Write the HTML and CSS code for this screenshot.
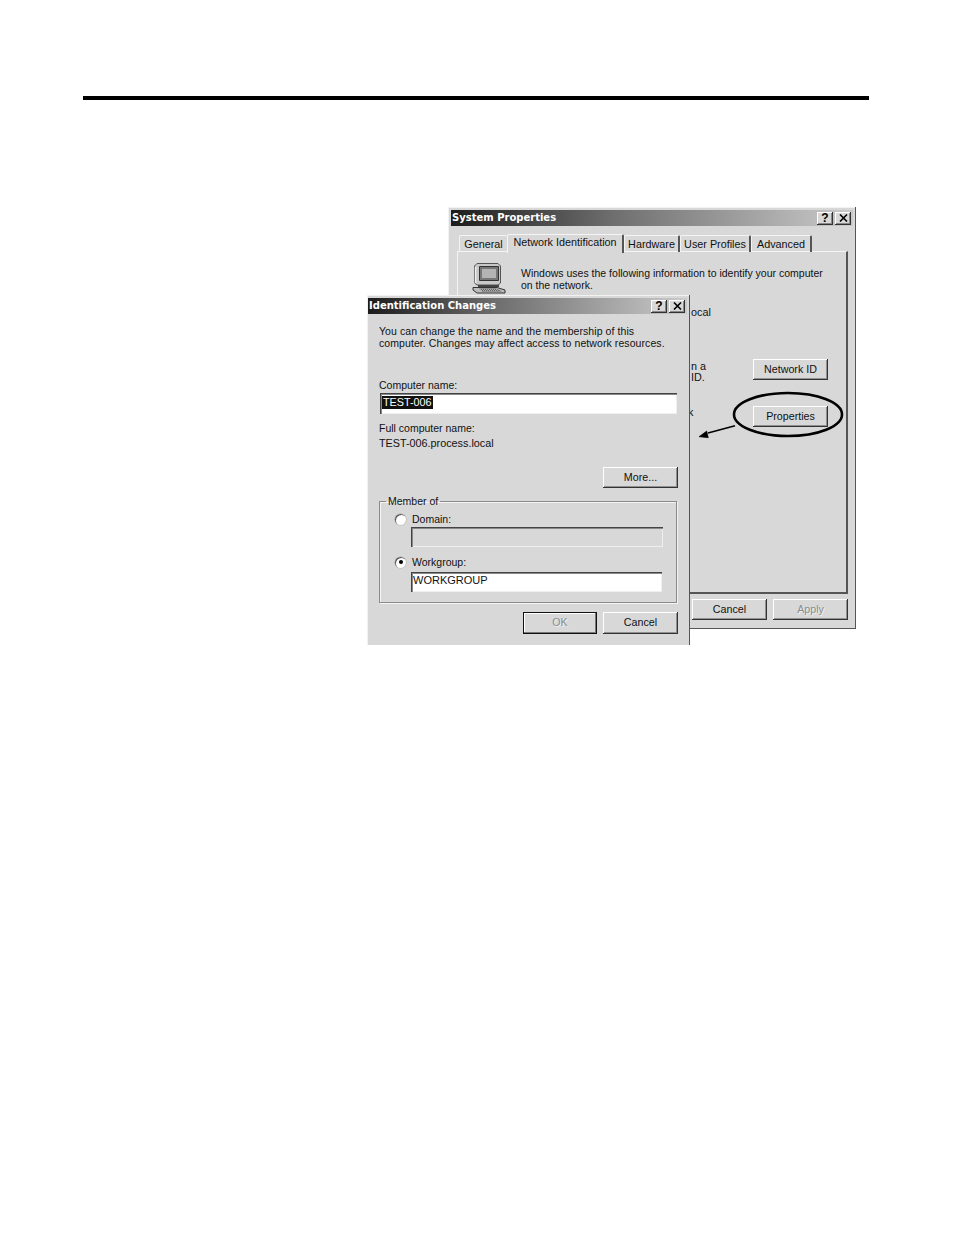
FILE: index.html
```html
<!DOCTYPE html>
<html lang="en">
<head>
<meta charset="utf-8">
<title>Identification Changes</title>
<link rel="stylesheet" href="styles.css">
</head>
<body>
<div class="page">
  <div class="rule"></div>

  <section class="win win-back">
    <header class="titlebar">
      <span class="title">System Properties</span>
      <span class="tbtn q">?</span>
      <span class="tbtn x"><svg width="9" height="8" viewBox="0 0 9 8"><path d="M1 0.5L8 7.5M8 0.5L1 7.5" stroke="#000" stroke-width="1.6" fill="none"/></svg></span>
    </header>
    <nav class="tabs">
      <span class="tab t-general">General</span>
      <span class="tab active t-net">Network Identification</span>
      <span class="tab t-hw">Hardware</span>
      <span class="tab t-up">User Profiles</span>
      <span class="tab t-adv">Advanced</span>
    </nav>
    <div class="panel">
      <div class="row-intro">
        <svg class="pc" width="34" height="31" viewBox="0 0 34 31">
          <path d="M2.5 3L5 0.5H26L28.5 3V20L26 22H5L2.5 20Z" fill="#c8c8c8" stroke="#555" stroke-width="1"/>
          <path d="M7.5 3.5H26.5V17.5H7.5Z" fill="#777" stroke="#333" stroke-width="1"/>
          <path d="M10 6H24V15H10Z" fill="#b4b4b4"/>
          <path d="M3.5 4V20" stroke="#f0f0f0" stroke-width="1.5"/>
          <path d="M6 22H27V24H6Z" fill="#444"/>
          <path d="M1 24.5H25L33 27V30H5L1 27Z" fill="#bdbdbd" stroke="#333" stroke-width="1"/>
          <path d="M7 25.5H24L30 28.5H10Z" fill="#666"/>
          <path d="M8 26.5H25M9 27.5H27" stroke="#ddd" stroke-width="0.6" stroke-dasharray="1 1"/>
        </svg>
        <p class="intro">Windows uses the following information to identify your computer<br>on the network.</p>
      </div>
      <p class="frag f-ocal">ocal</p>
      <div class="action a-net">
        <p class="frag f-tight">n a<br>ID.</p>
        <span class="btn b-side">Network ID</span>
      </div>
      <div class="action a-prop">
        <p class="frag f-k">k</p>
        <span class="btn b-side">Properties</span>
      </div>
    </div>
    <footer class="foot">
      <span class="btn b-std">Cancel</span>
      <span class="btn b-std disabled">Apply</span>
    </footer>
  </section>

  <svg class="callout" width="160" height="60" viewBox="0 0 160 60">
    <ellipse cx="56" cy="22.5" rx="54" ry="21.5" fill="none" stroke="#000" stroke-width="2.6"/>
    <path d="M3 33.7L-24 41" stroke="#000" stroke-width="1.6" fill="none"/>
    <path d="M-33 44.7L-25.3 39L-23.7 45.7Z" fill="#000" stroke="#000" stroke-width="0.6"/>
  </svg>

  <section class="win win-front">
    <header class="titlebar">
      <span class="title">Identification Changes</span>
      <span class="tbtn q">?</span>
      <span class="tbtn x"><svg width="9" height="8" viewBox="0 0 9 8"><path d="M1 0.5L8 7.5M8 0.5L1 7.5" stroke="#000" stroke-width="1.6" fill="none"/></svg></span>
    </header>
    <div class="dlg">
      <p class="lead">You can change the name and the membership of this<br>computer. Changes may affect access to network resources.</p>
      <label class="lbl-name">Computer name:</label>
      <div class="field f-name"><span class="sel">TEST-006</span></div>
      <p class="lbl-full">Full computer name:</p>
      <p class="val-full">TEST-006.process.local</p>
      <div class="more-row"><span class="btn b-std">More...</span></div>
      <fieldset class="group">
        <legend>Member of</legend>
        <div class="radio-row"><span class="radio"></span><span>Domain:</span></div>
        <div class="field f-dom off"></div>
        <div class="radio-row r-wg"><span class="radio on"></span><span>Workgroup:</span></div>
        <div class="field f-wg"><span class="wg">WORKGROUP</span></div>
      </fieldset>
      <div class="dlg-foot">
        <span class="btn b-ok disabled">OK</span>
        <span class="btn b-std">Cancel</span>
      </div>
    </div>
  </section>
</div>
</body>
</html>
```
FILE: styles.css
```css
* { box-sizing: border-box; }
html, body { margin: 0; padding: 0; background: #fff; }
p { margin: 0; }
.page {
  position: relative;
  width: 954px;
  height: 1235px;
  overflow: hidden;
  background: #fff;
  font: 10.5px/12px "Liberation Sans", Arial, sans-serif;
  color: #111;
}
.rule { position: relative; top: 96px; margin: 0 85px 0 83px; height: 4px; background: #000; }

.win {
  position: absolute;
  background: #d8d8d8;
  display: flex;
  flex-direction: column;
  box-shadow: inset 1px 1px #f2f2f2;
}
.win-back {
  left: 448px; top: 207px; width: 408px; height: 422px;
  padding: 3px 2px 0 3px;
  border-right: 1px solid #555;
  border-bottom: 1px solid #555;
}
.win-front {
  left: 367px; top: 295px; width: 323px; height: 350px;
  padding: 3px 2px 0 1px;
  border-right: 1px solid #555;
}
.titlebar {
  height: 16px;
  display: flex;
  align-items: center;
  padding: 0 2px 0 1px;
  background: linear-gradient(90deg, #1c1c1c 0%, #6e6e6e 40%, #cacaca 100%);
  flex: none;
}
.title {
  flex: 1;
  font: bold 10px/16px "DejaVu Sans", Verdana, sans-serif;
  color: #fff;
}
.tbtn {
  width: 16px; height: 13px;
  background: #d8d8d8;
  box-shadow: inset -1px -1px #333, inset 1px 1px #fff, inset -2px -2px #888;
  display: flex; align-items: center; justify-content: center;
  font: bold 12px/13px "Liberation Sans", Arial, sans-serif;
  color: #000;
}
.tbtn.x { margin-left: 2px; }

.tabs { display: flex; align-items: flex-end; height: 19px; margin: 7px 0 0 8px; position: relative; z-index: 1; flex: none; }
.tab {
  height: 17px;
  font-size: 10.8px;
  line-height: 16px;
  text-align: center;
  border-top: 1px solid #f4f4f4;
  border-left: 1px solid #f4f4f4;
  border-right: 2px solid #555;
  border-radius: 2px 2px 0 0;
}
.tab.active { height: 19px; line-height: 15px; background: #d8d8d8; margin-bottom: -1px; }
.t-general { width: 48px; border-right: 0; }
.t-net { width: 117px; }
.t-hw { width: 56px; }
.t-up { width: 71px; }
.t-adv { width: 61px; }

.panel {
  margin: -1px 5px 0 6px;
  height: 343px;
  padding: 12px 18px 0 14px;
  border-top: 1px solid #f4f4f4;
  border-left: 1px solid #f4f4f4;
  border-right: 2px solid #555;
  border-bottom: 2px solid #555;
  flex: none;
}
.row-intro { display: flex; height: 30px; }
.pc { margin-top: -1px; flex: none; }
.intro { margin: 3px 0 0 15px; white-space: nowrap; }
.frag { margin-left: 219px; white-space: nowrap; font-size: 10.8px; }
.f-ocal { margin-top: 12px; }
.f-tight { line-height: 11px; }
.action { display: flex; justify-content: space-between; align-items: flex-start; }
.a-net { margin-top: 41px; height: 25px; }
.a-net .frag { margin-top: 2px; }
.a-prop { margin-top: 22px; }
.a-prop .f-k { margin: 0 0 0 216px; }

.btn {
  display: inline-flex; align-items: center; justify-content: center;
  height: 21px;
  padding-bottom: 2px;
  font-size: 10.7px;
  background: #d8d8d8;
  box-shadow: inset -1px -1px #333, inset 1px 1px #fff, inset -2px -2px #909090;
}
.b-side, .b-std { width: 75px; }
.disabled { color: #8c8c8c; text-shadow: 1px 1px #f0f0f0; }
.foot { display: flex; justify-content: flex-end; gap: 6px; margin: 5px 5px 0 0; flex: none; }

.callout { position: absolute; left: 732px; top: 392px; overflow: visible; }

.dlg { padding: 11px 9px 0 11px; flex: 1; }
.lead { white-space: nowrap; letter-spacing: 0.08px; }
.lbl-name { display: block; margin-top: 30px; }
.field {
  height: 21px;
  margin: 2px 0 0 1px;
  padding: 3px 0 0 2px;
  background: #fff;
  box-shadow: inset 1px 1px #444, inset 2px 2px #888, inset -1px -1px #efefef;
}
.f-name { width: 297px; }
.sel { display: inline-block; background: #111; color: #fff; padding: 0 1px; height: 13px; font-size: 10.8px; line-height: 13px; }
.lbl-full { margin-top: 8px; }
.val-full { margin-top: 3px; font-size: 10.8px; }
.more-row { display: flex; justify-content: flex-end; margin: 18px 0 0; }
.group {
  margin: 7px 0 0;
  padding: 6px 14px 10px 15px;
  width: 298px;
  min-width: 0;
  border: 1px solid #8a8a8a;
  box-shadow: 1px 1px #f4f4f4, inset 1px 1px #f4f4f4;
}
.group legend { margin-left: -9px; padding: 0 2px; line-height: 12px; }
.radio-row { display: flex; align-items: center; gap: 6px; height: 12px; }
.radio {
  width: 11px; height: 11px; border-radius: 50%;
  background: #fff;
  box-shadow: inset 1px 1px #555, 0 0 0 0.5px #aaa;
  display: flex; align-items: center; justify-content: center;
}
.radio.on::after { content: ""; width: 4px; height: 4px; border-radius: 50%; background: #000; }
.f-dom, .f-wg { width: 252px; height: 20px; margin: 2px 0 0 16px; }
.f-wg { width: 251px; margin-top: 4px; padding-top: 2px; }
.f-dom.off { background: #d8d8d8; }
.r-wg { margin-top: 9px; }
.wg { font-size: 11px; }
.dlg-foot { display: flex; justify-content: flex-end; gap: 6px; margin: 9px 0 0; }
.dlg-foot .btn { height: 22px; }
.b-ok { width: 74px; box-shadow: inset 0 0 0 1px #111, inset -2px -2px #777, inset 2px 2px #fff; }
```
